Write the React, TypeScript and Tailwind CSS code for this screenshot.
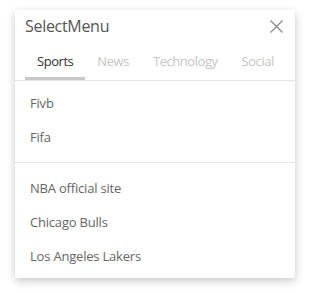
import { useState } from 'react';

const TABS = ['Sports', 'News', 'Technology', 'Social'];

const GROUPS = [
  ['Fivb', 'Fifa'],
  ['NBA official site', 'Chicago Bulls', 'Los Angeles Lakers'],
];

function CloseIcon() {
  return (
    <svg width="13" height="13" viewBox="0 0 13 13" fill="none" stroke="#8a8a8a" strokeWidth="1.4">
      <path d="M0.5 0.5L12.5 12.5M12.5 0.5L0.5 12.5" />
    </svg>
  );
}

export default function App() {
  const [active, setActive] = useState('Sports');

  return (
    <div className="min-h-screen bg-white pt-[10px] pl-[15px] font-['Open_Sans',sans-serif]">
      <div className="w-[280px] bg-white rounded-[2px] shadow-[0_3px_10px_rgba(0,0,0,0.22)]">
        {/* Header */}
        <div className="flex items-center justify-between h-[32px] pl-[10px] pr-[12px]">
          <span className="text-[16px] text-[#555555] tracking-[-0.3px]">SelectMenu</span>
          <button type="button" className="flex items-center justify-center" aria-label="Close">
            <CloseIcon />
          </button>
        </div>

        {/* Tabs */}
        <div className="mt-[4px] flex pl-[10px] border-b border-[#e6e6e6]">
          {TABS.map((tab) => (
            <button
              key={tab}
              type="button"
              onClick={() => setActive(tab)}
              className={
                tab === active
                  ? 'h-[34px] px-3 flex items-center text-[13px] tracking-[-0.45px] text-[#333333] border-b-[3px] border-[#c8c8c8]'
                  : 'h-[34px] px-3 flex items-center text-[13px] tracking-[-0.45px] text-[#c6c6c6] border-b-[3px] border-transparent'
              }
            >
              {tab}
            </button>
          ))}
        </div>

        {/* Items */}
        {GROUPS.map((group, gi) => (
          <div
            key={gi}
            className={
              gi === 0
                ? 'pt-[6px] pb-[7px] border-b border-[#e6e6e6]'
                : 'pt-[9px] pb-[4px]'
            }
          >
            {group.map((item) => (
              <div key={item} className="h-[34px] flex items-center px-[15px] text-[13px] tracking-[-0.2px] text-[#666666]">
                {item}
              </div>
            ))}
          </div>
        ))}
      </div>
    </div>
  );
}
